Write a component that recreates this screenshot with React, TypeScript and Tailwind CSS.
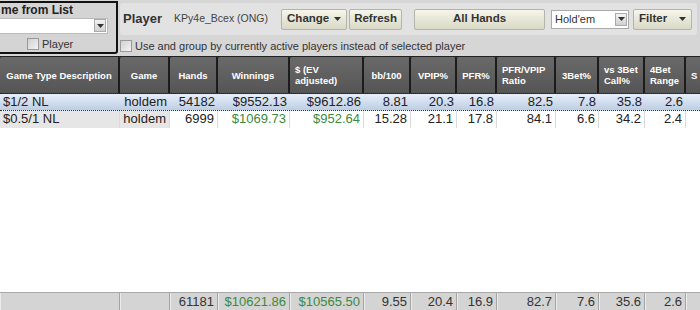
import React from "react";

const cols =
  "grid grid-cols-[120px_50px_48px_72px_74px_47px_46px_40px_59px_43px_46px_41px_40px]";

const headers: Array<React.ReactNode> = [
  "Game Type Description",
  "Game",
  "Hands",
  "Winnings",
  <>
    $ (EV
    <br />
    adjusted)
  </>,
  "bb/100",
  "VPIP%",
  "PFR%",
  <>
    PFR/VPIP
    <br />
    Ratio
  </>,
  "3Bet%",
  <>
    vs 3Bet
    <br />
    Call%
  </>,
  <>
    4Bet
    <br />
    Range
  </>,
  <>S</>,
];

type Cell = { v: string; green?: boolean };

const rows: Array<Array<Cell>> = [
  [
    { v: "$1/2 NL" },
    { v: "holdem" },
    { v: "54182" },
    { v: "$9552.13" },
    { v: "$9612.86" },
    { v: "8.81" },
    { v: "20.3" },
    { v: "16.8" },
    { v: "82.5" },
    { v: "7.8" },
    { v: "35.8" },
    { v: "2.6" },
    { v: "" },
  ],
  [
    { v: "$0.5/1 NL" },
    { v: "holdem" },
    { v: "6999" },
    { v: "$1069.73", green: true },
    { v: "$952.64", green: true },
    { v: "15.28" },
    { v: "21.1" },
    { v: "17.8" },
    { v: "84.1" },
    { v: "6.6" },
    { v: "34.2" },
    { v: "2.4" },
    { v: "" },
  ],
];

const totals: Array<Cell> = [
  { v: "" },
  { v: "" },
  { v: "61181" },
  { v: "$10621.86", green: true },
  { v: "$10565.50", green: true },
  { v: "9.55" },
  { v: "20.4" },
  { v: "16.9" },
  { v: "82.7" },
  { v: "7.6" },
  { v: "35.6" },
  { v: "2.6" },
  { v: "" },
];

const Arrow = () => (
  <svg width="7" height="4" viewBox="0 0 7 4" className="fill-[#333] shrink-0">
    <path d="M0 0h7L3.5 4z" />
  </svg>
);

const Button: React.FC<{ children: React.ReactNode; className?: string }> = ({
  children,
  className = "",
}) => (
  <div
    className={`h-[21px] flex items-center px-[5px] border border-[#b4b4aa] rounded-[2px] bg-gradient-to-b from-[#f5f5ea] to-[#d9d9c6] text-[11.5px] font-bold text-[#333] ${className}`}
  >
    {children}
  </div>
);

const DropBtn = () => (
  <div className="w-[12px] h-[13px] flex items-center justify-center border border-[#aaa] bg-gradient-to-b from-[#f4f4f4] to-[#d0d0d0]">
    <Arrow />
  </div>
);

const Check = () => (
  <div className="w-[12px] h-[12px] border border-[#999] bg-gradient-to-br from-[#d0d0d0] to-[#f4f4f4]" />
);

export default function App() {
  return (
    <div className="w-[700px] h-[310px] overflow-hidden flex flex-col bg-white font-['Liberation_Sans',Arial,sans-serif] text-[#222]">
      {/* top bar */}
      <div className="h-[57px] shrink-0 flex bg-[#d6d6d6] border-b border-[#222]">
        <div className="w-[118px] h-[53px] mt-[1px] flex flex-col border-t-2 border-r-2 border-b-2 border-[#111] rounded-br-[3px] bg-[#d4d4d4]">
          <div className="h-[15px] text-[12px] font-bold leading-[15px] pl-[1px] text-[#222]">
            me from List
          </div>
          <div className="mr-[8px] h-[17px] flex items-center justify-end pr-[1px] bg-white border border-[#bbb] border-l-0">
            <DropBtn />
          </div>
          <div className="flex items-center gap-[3px] pl-[27px] mt-[2px] text-[11px]">
            <Check />
            <span className="text-[#333]">Player</span>
          </div>
        </div>

        <div className="flex-1 flex flex-col pl-[2px]">
          <div className="mt-[3px] mr-[3px] h-[32px] flex items-center rounded-[3px] bg-[#e2e2e2] pl-[3px]">
            <span className="text-[13px] font-bold text-[#333]">Player</span>
            <span className="ml-[12px] text-[10.5px] text-[#444] w-[107px]">
              KPy4e_Bcex (ONG)
            </span>
            <Button className="w-[66px] justify-between">
              Change
              <Arrow />
            </Button>
            <Button className="w-[53px] ml-[2px] justify-center">Refresh</Button>
            <Button className="w-[131px] ml-[12px] justify-center">All Hands</Button>
            <div className="ml-[6px] w-[78px] h-[19px] flex items-center justify-between pl-[3px] pr-[1px] bg-white border border-[#aaa] text-[11px] text-[#333]">
              Hold'em
              <DropBtn />
            </div>
            <Button className="w-[59px] ml-[4px] justify-between">
              Filter
              <Arrow />
            </Button>
          </div>
          <div className="flex items-center gap-[3px] mt-[3px] text-[11px] text-[#333]">
            <Check />
            <span>Use and group by currently active players instead of selected player</span>
          </div>
        </div>
      </div>

      {/* table header */}
      <div className={`${cols} h-[37px] shrink-0 bg-[#3a3a3a] border-b border-dotted border-[#222]`}>
        {headers.map((h, i) => (
          <div
            key={i}
            className={`flex items-center ${
              typeof h === "string" ? "justify-center text-center" : "justify-start pl-[5px] text-left"
            } bg-gradient-to-b from-[#6a6a6a] to-[#555] border-r-2 border-[#1c1c1c] rounded-t-[2px] text-white font-bold text-[9.5px] leading-[11px] whitespace-nowrap`}
          >
            {h}
          </div>
        ))}
      </div>

      {/* rows */}
      {rows.map((r, ri) => (
        <div
          key={ri}
          className={`${cols} h-[17px] shrink-0 text-[13px] leading-[16px] ${
            ri === 0
              ? "bg-gradient-to-b from-[#e6eef9] to-[#bdcee4] border-b border-dotted border-[#333]"
              : "bg-white"
          }`}
        >
          {r.map((c, ci) => (
            <div
              key={ci}
              className={`px-[3px] whitespace-nowrap overflow-hidden ${
                ci === 0 ? "text-left" : "text-right"
              } ${ri === 1 && ci < 2 ? "bg-[#e6e6e6]" : ""} ${
                ri === 1 ? "border-r border-[#dadada]" : ""
              } ${c.green ? "text-[#3b8a3b]" : "text-[#222]"}`}
            >
              {c.v}
            </div>
          ))}
        </div>
      ))}

      <div className="flex-1 bg-white" />

      {/* totals */}
      <div className={`${cols} h-[18px] shrink-0 bg-[#d4d4d4] border-t border-[#a8a8a8] text-[13px] leading-[17px]`}>
        {totals.map((c, ci) => (
          <div
            key={ci}
            className={`px-[3px] text-right whitespace-nowrap border-r border-[#a4a4a4] border-l border-l-[#ececec] ${
              c.green ? "text-[#3b8a3b]" : "text-[#333]"
            }`}
          >
            {c.v}
          </div>
        ))}
      </div>
    </div>
  );
}
